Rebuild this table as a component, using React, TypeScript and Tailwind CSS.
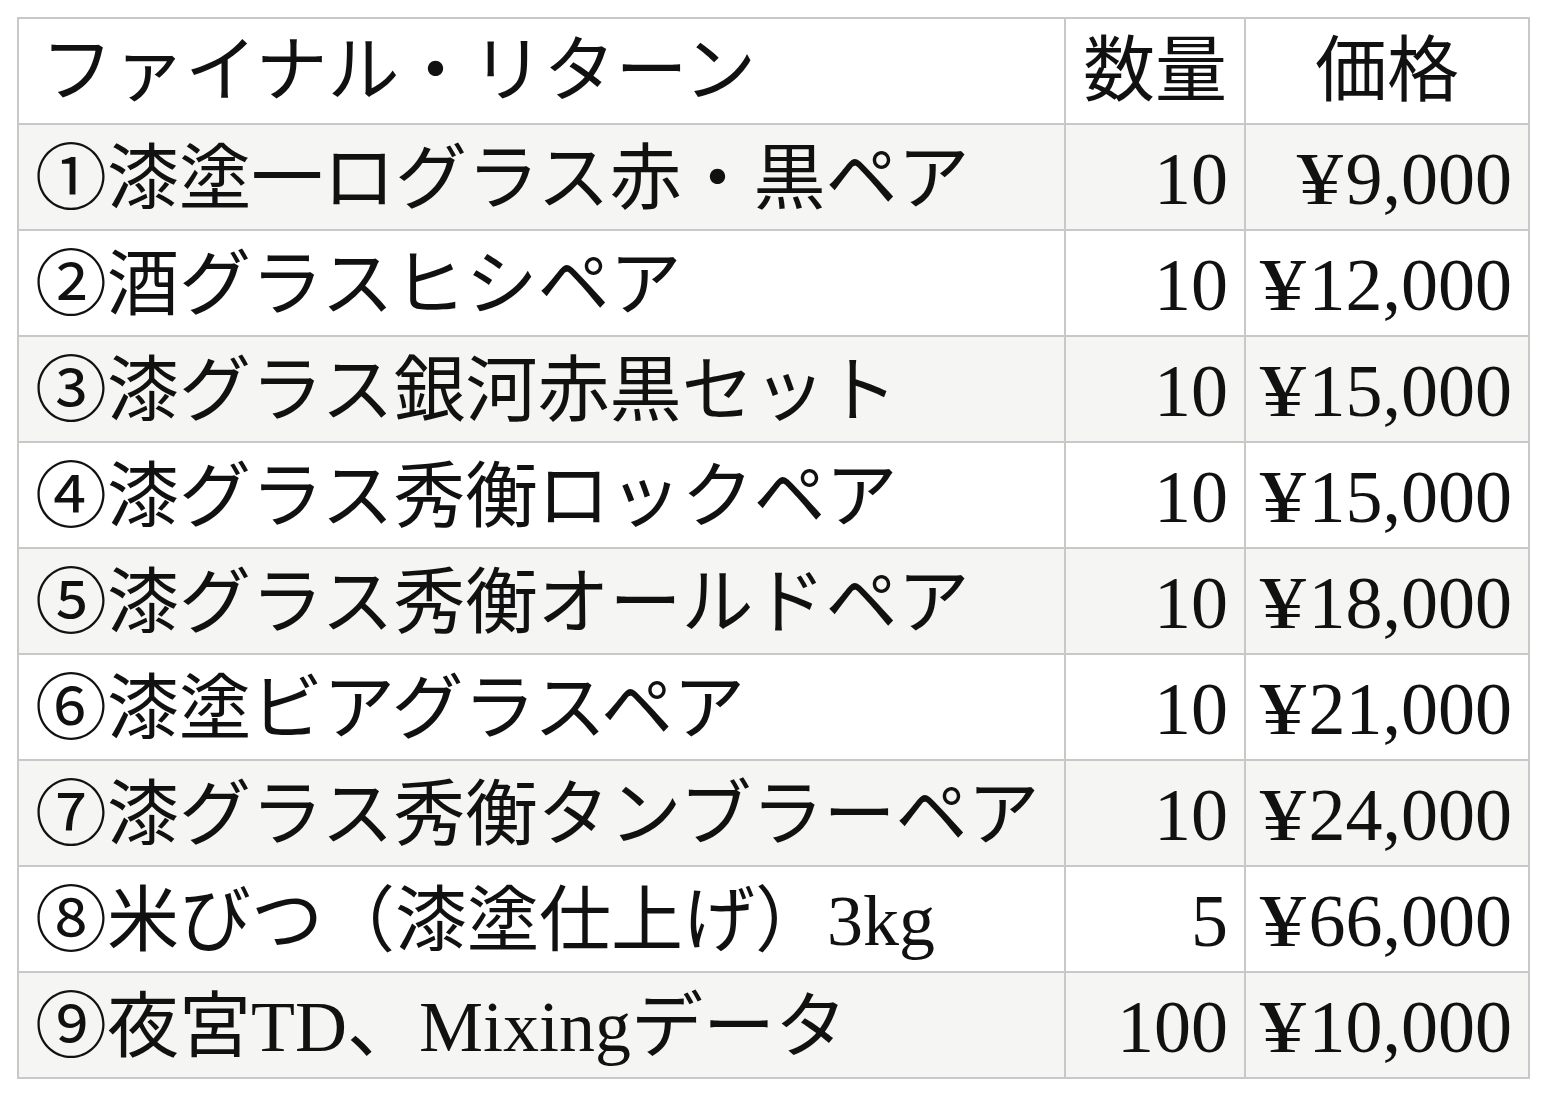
const rows = [
  { name: '①漆塗一ログラス赤・黒ペア', qty: '10', price: '9,000' },
  { name: '②酒グラスヒシペア', qty: '10', price: '12,000' },
  { name: '③漆グラス銀河赤黒セット', qty: '10', price: '15,000' },
  { name: '④漆グラス秀衡ロックペア', qty: '10', price: '15,000' },
  { name: '⑤漆グラス秀衡オールドペア', qty: '10', price: '18,000' },
  { name: '⑥漆塗ビアグラスペア', qty: '10', price: '21,000' },
  { name: '⑦漆グラス秀衡タンブラーペア', qty: '10', price: '24,000' },
  { name: '⑧米びつ（漆塗仕上げ）3kg', qty: '5', price: '66,000' },
  { name: '⑨夜宮TD、Mixingデータ', qty: '100', price: '10,000' },
]

const font = { fontFamily: '"Liberation Serif", "Noto Sans CJK JP", serif' }

export default function App() {
  return (
    <div className="min-h-screen bg-white pt-[17px] pl-[17px]" style={font}>
      <table className="table-fixed border-collapse w-[1511px] text-[72px] text-[#111]">
        <colgroup>
          <col className="w-[1047px]" />
          <col className="w-[180px]" />
          <col className="w-[284px]" />
        </colgroup>
        <thead>
          <tr className="bg-white">
            <th className="h-[106px] border-2 border-[#c8c8c8] pl-[22px] text-left font-normal leading-none">ファイナル・リターン</th>
            <th className="h-[106px] border-2 border-[#c8c8c8] px-2 text-center font-normal leading-none">数量</th>
            <th className="h-[106px] border-2 border-[#c8c8c8] px-2 text-center font-normal leading-none">価格</th>
          </tr>
        </thead>
        <tbody>
          {rows.map((r, i) => (
            <tr key={i} className={i % 2 === 0 ? 'bg-[#f5f5f4]' : 'bg-white'}>
              <td className="h-[106px] border-2 border-[#c8c8c8] px-4 pt-1 leading-none whitespace-nowrap">{r.name}</td>
              <td className="h-[106px] border-2 border-[#c8c8c8] pr-4 pt-1 text-right text-[74px] leading-none">{r.qty}</td>
              <td className="h-[106px] border-2 border-[#c8c8c8] pr-4 pt-1 text-right text-[74px] leading-none whitespace-nowrap">
                <span className="inline-block scale-x-125 origin-right mr-[3px]">¥</span>{r.price}
              </td>
            </tr>
          ))}
        </tbody>
      </table>
    </div>
  )
}
